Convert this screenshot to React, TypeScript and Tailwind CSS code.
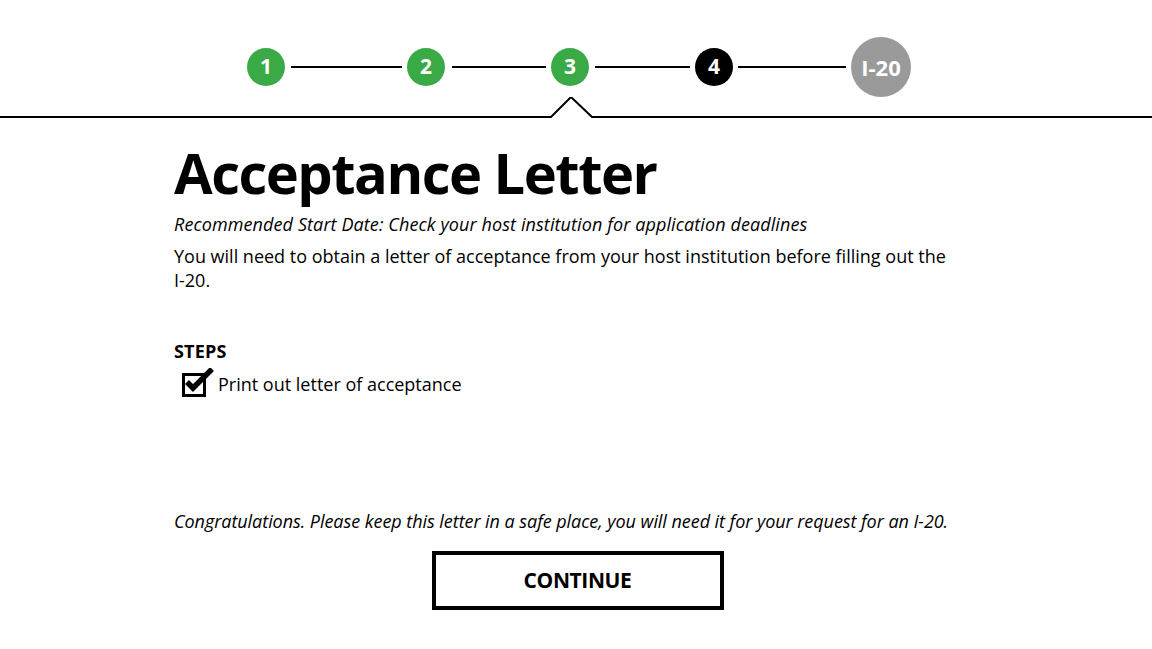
import React from 'react';

const font = { fontFamily: '"Open Sans", "Noto Sans", sans-serif' };

const Dot = ({ label, className }: { label: string; className: string }) => (
  <div
    className={`flex h-[38px] w-[38px] shrink-0 items-center justify-center rounded-full text-[21px] font-bold text-white ${className}`}
  >
    {label}
  </div>
);

const Line = ({ w }: { w: string }) => <div className={`h-[2px] bg-black ${w}`} />;

const CheckIcon = () => (
  <svg width="34" height="30" viewBox="0 0 34 30" className="shrink-0">
    <rect x="1.5" y="6.5" width="21" height="21" fill="none" stroke="black" strokeWidth="3" />
    <path d="M5 14 L11 20 L30 1" fill="none" stroke="black" strokeWidth="5.5" strokeLinecap="butt" />
  </svg>
);

export default function App() {
  return (
    <div className="min-h-[649px] w-full bg-white text-black" style={font}>
      {/* progress */}
      <div className="flex items-center justify-center pt-[37px] pl-[6px]">
        <Dot label="1" className="bg-[#3aaa47]" />
        <div className="w-[6px]" />
        <Line w="w-[111px]" />
        <div className="w-[5px]" />
        <Dot label="2" className="bg-[#3aaa47]" />
        <div className="w-[7px]" />
        <Line w="w-[94px]" />
        <div className="w-[5px]" />
        <Dot label="3" className="bg-[#3aaa47]" />
        <div className="w-[6px]" />
        <Line w="w-[95px]" />
        <div className="w-[5px]" />
        <Dot label="4" className="bg-black" />
        <div className="w-[5px]" />
        <Line w="w-[108px]" />
        <div className="w-[5px]" />
        <div className="flex h-[60px] w-[60px] shrink-0 items-center justify-center rounded-full bg-[#9a9a9a] text-[22px] font-bold text-white">
          I-20
        </div>
      </div>
      <svg width="1152" height="24" viewBox="0 0 1152 24" className="block">
        <polyline
          points="0,20 551,20 571,0 592,20 1152,20"
          fill="none"
          stroke="black"
          strokeWidth="2"
        />
      </svg>

      <div className="mx-auto w-[804px]">
        <h1 className="mt-[20px] text-[56px] font-bold leading-[62px] tracking-[-1.5px]">Acceptance Letter</h1>
        <p className="mt-[9px] text-[18px] italic leading-[24px] tracking-[0.1px]">
          Recommended Start Date: Check your host institution for application deadlines
        </p>
        <p className="mt-[8px] w-[778px] text-[18px] leading-[24px]">
          You will need to obtain a letter of acceptance from your host institution before filling out the I-20.
        </p>

        <div className="mt-[48px] text-[18px] font-bold leading-[22px] tracking-[0.2px]">STEPS</div>
        <div className="mt-[5px] flex items-center gap-[2px] pl-[8px]">
          <CheckIcon />
          <span className="mt-[4px] text-[18px]">Print out letter of acceptance</span>
        </div>

        <p className="mt-[111px] text-[18px] italic leading-[24px] tracking-[-0.05px]">
          Congratulations. Please keep this letter in a safe place, you will need it for your request for an I-20.
        </p>
        <div className="mt-[18px] flex justify-center pl-[3px]">
          <button className="flex h-[59px] w-[292px] items-center justify-center border-[4px] border-black bg-white text-[21px] font-bold tracking-[-0.4px]">
            CONTINUE
          </button>
        </div>
      </div>
    </div>
  );
}
